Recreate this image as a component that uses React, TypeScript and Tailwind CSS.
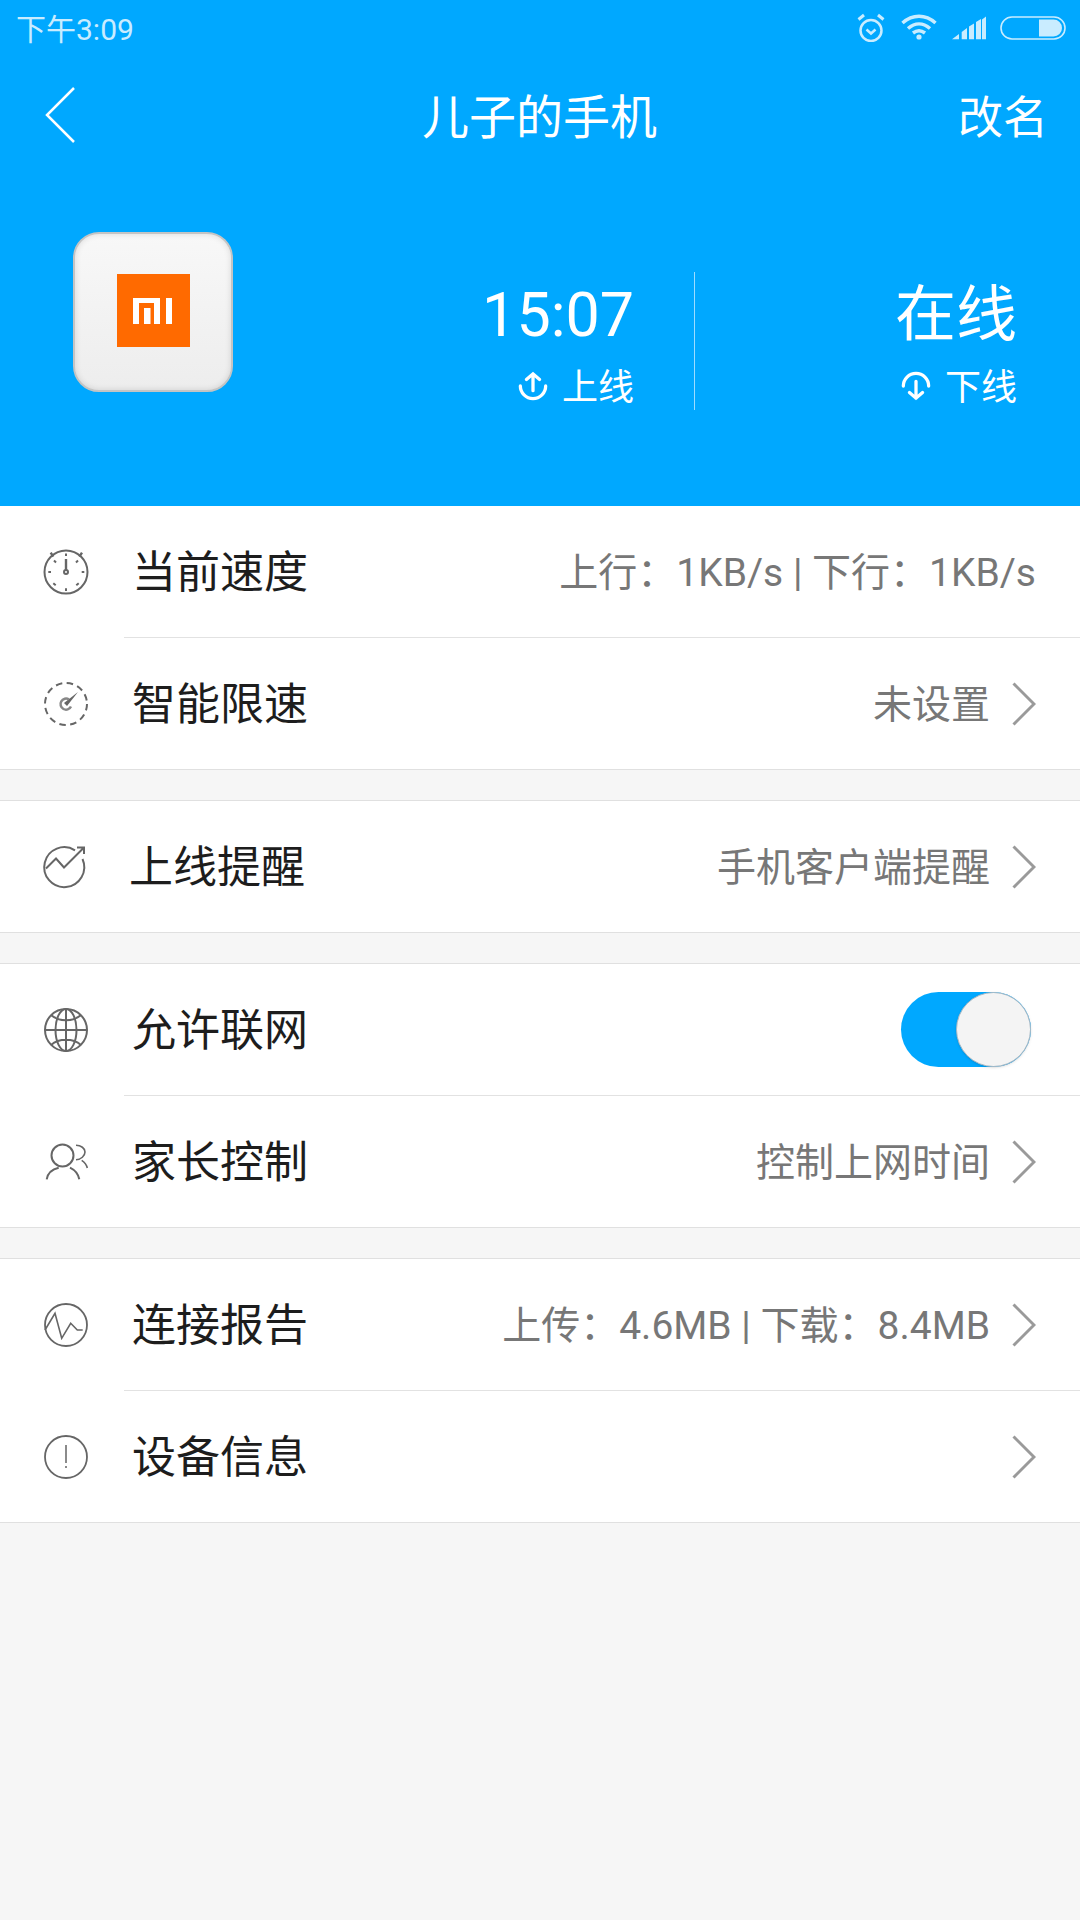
const cjk = "font-['Roboto','Noto_Sans_CJK_SC',sans-serif]";

const Chevron = () => (
  <svg className="h-[44px] w-[24px] shrink-0" viewBox="0 0 24 44" fill="none">
    <path d="M1.5 1.5 L22 22 L1.5 42.5" stroke="#9a9a9a" strokeWidth="3" />
  </svg>
);

const IconBox = ({ children }: { children: React.ReactNode }) => (
  <svg className="h-[64px] w-[64px]" viewBox="0 0 64 64" fill="none" stroke="#666" strokeWidth="2">
    {children}
  </svg>
);

const ClockIcon = () => (
  <IconBox>
    <circle cx="32" cy="32" r="21.5" />
    <path d="M16.7 12.7l2.6 4M48 12.7l-2.6 4" strokeWidth="2.4" />
    <path d="M32 19v11" strokeWidth="2.4" />
    <circle cx="32" cy="32" r="2" />
    <path d="M32 13.5v2.5M32 48.3v2.7M14.3 32H17M47.7 32h2.6M19.3 43.3l2.4 2M44.7 43.3l-2.4 2M20 20.5l2 2M44 20.5l-2 2" />
  </IconBox>
);

const LimitIcon = () => (
  <IconBox>
    <circle cx="32" cy="32" r="21" strokeDasharray="6.5 4.5" />
    <path d="M44 20L30 31l3 3Z" fill="#666" stroke="none" />
    <path d="M35 27.5A5.5 5.5 0 1 0 37 34.5" stroke="#888" strokeWidth="2.5" />
  </IconBox>
);

const TrendIcon = () => (
  <IconBox>
    <path d="M41 15.3A20 20 0 1 0 48.5 24" />
    <path d="M12 33.5l10-10 8 9 20-20M43 12.5h7V19" />
  </IconBox>
);

const GlobeIcon = () => (
  <IconBox>
    <circle cx="32" cy="32" r="21" />
    <ellipse cx="32" cy="32" rx="10.5" ry="21" />
    <path d="M32 11v42M11 32h42M17 17c8 7 22 7 30 0M17 47c8-7 22-7 30 0" />
  </IconBox>
);

const PeopleIcon = () => (
  <IconBox>
    <circle cx="28.5" cy="25.5" r="11" />
    <path d="M12.7 49.3c1-6 5-10 12-11.6M45.3 49.3c-1-5-4-9-9.3-11.6" />
    <path d="M42 15.3c5 0 9 3 9 6.7s-4 7.7-9 7.7M47.7 30.3c3 2 5 4.700 5.600 7.700" strokeWidth="1.6" />
  </IconBox>
);

const ReportIcon = () => (
  <IconBox>
    <circle cx="32" cy="32" r="21" strokeWidth="1.800" />
    <path d="M11 37L21 20.300L27.700 45.300L36.700 30.300L43.300 37H48.700" strokeWidth="1.600" />
  </IconBox>
);

const InfoIcon = () => (
  <IconBox>
    <circle cx="32" cy="32" r="21" strokeWidth="1.800" />
    <path d="M32 20v18M32 41v2" strokeWidth="1.500" />
  </IconBox>
);

const Toggle = () => (
  <div className="mr-[5px] flex h-[75px] w-[130px] justify-end rounded-full bg-[#00a8ff]">
    <div className="h-[75px] w-[75px] rounded-full border border-[#a9b9c4] bg-[#f4f4f4] shadow-sm" />
  </div>
);

const Row = ({ icon, label, value, chevron, toggle, last, labelClass }: { icon: JSX.Element; label: string; value?: string; chevron?: boolean; toggle?: boolean; last?: boolean; labelClass?: string }) => (
  <div className={`flex items-stretch bg-white ${last ? "h-[131px]" : "h-[132px]"}`}>
    <div className="flex w-[124px] shrink-0 items-center pl-[34px]">{icon}</div>
    <div className={`flex flex-1 items-center pr-[44px] pl-[8px] ${last ? "" : "border-b border-[#e2e2e2]"}`}>
      <span className={`pt-[3px] text-[44px] text-[#1d1d1d] ${labelClass ?? ""}`}>{label}</span>
      <div className="ml-auto flex items-center gap-[22px]">
        {value && <span className="pt-[3px] text-[39px] text-[#777]">{value}</span>}
        {chevron && <Chevron />}
        {toggle && <Toggle />}
      </div>
    </div>
  </div>
);

const Section = ({ children, first }: { children: React.ReactNode; first?: boolean }) => (
  <div className={`border-b border-[#e0e0e0] ${first ? "" : "mt-[30px] border-t"}`}>{children}</div>
);

const StatusBar = () => (
  <div className="flex h-[50px] items-center pr-[14px] pl-[16px] text-[30px] text-[#c9ecff]">
    <span className="mt-[8px]">下午3:09</span>
    <svg className="mt-[3px] ml-auto h-[30px] w-[30px]" viewBox="0 0 30 30" fill="none" stroke="#c9ecff" strokeWidth="2.5">
      <circle cx="15" cy="18.500" r="10.500" />
      <path d="M10.500 17.500l4.500 4 4.500-4" />
      <path d="M2.500 7.500l5.500-4.500M27.500 7.500L22 3" strokeWidth="3" />
    </svg>
    <svg className="mt-[4px] ml-[15px] h-[26px] w-[36px]" viewBox="0 0 36 26" fill="none" stroke="#c9ecff" strokeWidth="3.5">
      <path d="M1.500 9c10-9 23-9 33 0M7 14.500c7-6 15-6 22 0M12 19c4-3 8-3 12 0" />
      <circle cx="18" cy="23" r="2.600" fill="#c9ecff" stroke="none" />
    </svg>
    <svg className="mt-[5px] ml-[15px] h-[24px] w-[34px]" viewBox="0 0 34 24" fill="#c9ecff">
      <path d="M0 23.300L7 18V23.300ZM9.700 16L15 12V23.300H9.700ZM17 10.500L22 7.500V23.300H17ZM24 6L29 3V23.300H24ZM30 3.500L34 .5V23.300H30Z" />
    </svg>
    <svg className="mt-[5px] ml-[14px] h-[24px] w-[66px]" viewBox="0 0 66 24" fill="none">
      <rect x="1" y="1" width="64" height="22" rx="11" stroke="#c9ecff" strokeWidth="1.600" />
      <path d="M39 3.500h14.500a8.500 8.500 0 0 1 0 17H39Z" fill="#c9ecff" />
    </svg>
  </div>
);

const NavBar = () => (
  <div className="flex h-[116px] items-center pt-[16px] pr-[32px] pl-[45px] text-white">
    <svg className="mb-[2px] h-[56px] w-[30px]" viewBox="0 0 30 56" fill="none" stroke="#fff" strokeWidth="2.500">
      <path d="M29 1L2 28l27 27" />
    </svg>
    <span className="mt-[4px] ml-[347px] text-[47px]">儿子的手机</span>
    <span className="mt-[5px] ml-auto text-[45px]">改名</span>
  </div>
);

const MiLogo = () => (
  <div className="flex h-[160px] w-[160px] shrink-0 items-center justify-center rounded-[26px] border-2 border-[#c4c4c4] bg-gradient-to-b from-[#f8f8f8] to-[#ededed] shadow-[inset_0_0_6px_rgba(0,0,0,0.12)]">
    <div className="mb-[3px] flex h-[73px] w-[73px] items-center justify-center bg-[#ff6a00]">
      <svg className="h-[26px] w-[40px]" viewBox="0 0 40 26" fill="#fff">
        <path d="M0 0H27V26H21V5H6V26H0Z" />
        <rect x="11" y="10" width="6.500" height="16" />
        <rect x="33" y="0" width="6" height="26" />
      </svg>
    </div>
  </div>
);

const Hero = () => (
  <div className="flex h-[340px] items-start pt-[66px] pr-[63px] pl-[73px] text-white">
    <MiLogo />
    <div className="mt-[48px] flex w-[401px] flex-col items-end">
      <span className="text-[61px] leading-[70px]">15:07</span>
      <div className="mt-[13px] flex items-center text-[36px] leading-[50px]">
        <svg className="mr-[14px] mb-[4px] h-[30px] w-[30px]" viewBox="0 0 32 32" fill="none" stroke="#fff" strokeWidth="3.500" strokeLinecap="round">
          <path d="M16 21V3M9 9l7-6 7 6M2.500 16a13.500 13.500 0 0 0 27 0" />
        </svg>
        上线
      </div>
    </div>
    <div className="mt-[40px] ml-[60px] h-[138px] w-px bg-[#9ddcff]" />
    <div className="mt-[48px] flex flex-1 flex-col items-end">
      <span className="text-[61px] leading-[70px]">在线</span>
      <div className="mt-[13px] flex items-center text-[36px] leading-[50px]">
        <svg className="mr-[14px] mb-[4px] h-[30px] w-[30px]" viewBox="0 0 32 32" fill="none" stroke="#fff" strokeWidth="3.500" strokeLinecap="round">
          <path d="M16 11v18M9 23l7 6 7-6M2.500 16a13.500 13.500 0 0 1 27 0" />
        </svg>
        下线
      </div>
    </div>
  </div>
);

export default function App() {
  return (
    <main className={`flex min-h-[1920px] w-[1080px] flex-col bg-[#f6f6f6] ${cjk}`}>
      <div className="bg-[#00a8ff]">
        <StatusBar />
        <NavBar />
        <Hero />
      </div>
      <Section first>
        <Row icon={<ClockIcon />} label="当前速度" value="上行：1KB/s | 下行：1KB/s" />
        <Row icon={<LimitIcon />} label="智能限速" value="未设置" chevron last />
      </Section>
      <Section>
        <Row icon={<TrendIcon />} label="上线提醒" labelClass="-ml-[3px]" value="手机客户端提醒" chevron last />
      </Section>
      <Section>
        <Row icon={<GlobeIcon />} label="允许联网" toggle />
        <Row icon={<PeopleIcon />} label="家长控制" value="控制上网时间" chevron last />
      </Section>
      <Section>
        <Row icon={<ReportIcon />} label="连接报告" value="上传：4.6MB | 下载：8.4MB" chevron />
        <Row icon={<InfoIcon />} label="设备信息" chevron last />
      </Section>
    </main>
  );
}
